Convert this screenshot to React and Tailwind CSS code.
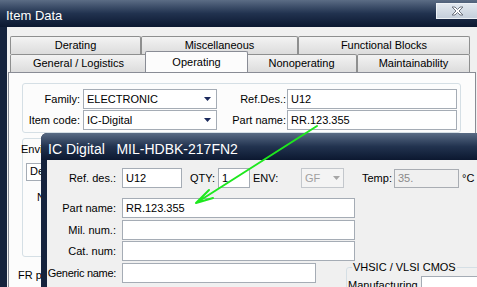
import React from "react"

const Tab = ({ label, w, selected }) => (
  <div
    className={
      selected
        ? "relative z-10 -mt-[2px] -mx-[2px] h-[21px] bg-[#fcfcfc] border border-b-0 border-[#898c95] rounded-t-[2px] flex items-center justify-center"
        : "h-[18px] bg-gradient-to-b from-[#f3f3f3] to-[#dcdcdc] border border-b-0 border-[#8e8f8f] rounded-t-[2px] flex items-center justify-center"
    }
    style={{ width: selected ? w + 4 : w }}
  >
    {label}
  </div>
)

const Arrow = ({ disabled }) => (
  <svg width="7" height="4" viewBox="0 0 7 4">
    <path d="M0 0H7L3.5 4Z" fill={disabled ? "#a6a6a6" : "#1b2a5c"} />
  </svg>
)

const Combo = ({ value, w }) => (
  <div className="h-[20px] border border-[#a5acb5] bg-white flex items-center justify-between pl-[3px] pr-[5px]" style={{ width: w }}>
    <span>{value}</span>
    <Arrow />
  </div>
)

const Box = ({ value, w }) => (
  <div className="h-[20px] border border-[#a5acb5] bg-white flex items-center pl-[3px]" style={{ width: w }}>
    {value}
  </div>
)

export default function App() {
  return (
    <div className="relative w-[477px] h-[287px] overflow-hidden bg-[#15233d] font-['Liberation_Sans',Arial,sans-serif] text-[11px] text-black">
      {/* outer window title */}
      <div className="h-[27px] flex items-start justify-between bg-gradient-to-b from-[#5c6d85] via-[#21324f] to-[#0c1830]">
        <div className="pl-[6px] pt-[6px] text-[13px] text-white">Item Data</div>
        <div className="mt-[3px] w-[41px] h-[16px] border border-[#eef2f6] border-r-0 bg-gradient-to-b from-[#e2e8ef] to-[#c5cfdb] flex items-center justify-center">
          <svg width="13" height="10" viewBox="0 0 13 10">
            <path d="M1 1H4L6.5 3.5L9 1H12L8 5L12 9H9L6.5 6.5L4 9H1L5 5Z" fill="#fff" stroke="#6f7580" strokeWidth="1" strokeLinejoin="round" />
          </svg>
        </div>
      </div>

      {/* outer window body */}
      <div className="ml-[7px] h-[260px] bg-[#f0f0f0] pt-[9px] pl-[1px]">
        <div className="ml-[2px] flex">
          <Tab label="Derating" w={131} />
          <Tab label="Miscellaneous" w={157} />
          <Tab label="Functional Blocks" w={172} />
        </div>
        <div className="ml-[2px] flex items-end h-[18px]">
          <Tab label="General / Logistics" w={137} />
          <Tab label="Operating" w={99} selected />
          <Tab label="Nonoperating" w={111} />
          <Tab label="Maintainability" w={113} />
        </div>

        <div className="w-[468px] h-[230px] border border-[#898c95] bg-[#fcfcfc] pt-[10px] pl-[13px]">
          <div className="w-[439px] h-[50px] border border-[#d5dfe5] rounded-[3px] pt-[5px] flex">
            <div className="flex flex-col gap-[1px]">
              <div className="flex items-center">
                <span className="w-[57px] text-right mr-[3px]">Family:</span>
                <Combo value="ELECTRONIC" w={134} />
              </div>
              <div className="flex items-center">
                <span className="w-[57px] text-right mr-[3px]">Item code:</span>
                <Combo value="IC-Digital" w={134} />
              </div>
            </div>
            <div className="ml-[12px] flex flex-col gap-[1px]">
              <div className="flex items-center">
                <span className="w-[57px] text-right mr-[1px]">Ref.Des.:</span>
                <Box value="U12" w={170} />
              </div>
              <div className="flex items-center">
                <span className="w-[57px] text-right mr-[1px]">Part name:</span>
                <Box value="RR.123.355" w={170} />
              </div>
            </div>
          </div>

          {/* environment group, mostly hidden under the dialog */}
          <div className="mt-[5px] w-[439px] h-[119px] border border-[#d5dfe5] rounded-[3px] pt-[2px]">
            <div className="-ml-[2px]">Environment</div>
            <div className="mt-[5px] ml-[3px] w-[120px] h-[18px] border border-[#a5acb5] bg-white flex items-center pl-[3px]">Default</div>
            <div className="mt-[8px] ml-[14px]">Nominal temperature</div>
          </div>
          <div className="mt-[10px] -ml-[4px]">FR prediction</div>
        </div>
      </div>

      {/* IC Digital dialog */}
      <div className="absolute left-[41px] top-[133px] w-[450px] h-[160px] rounded-tl-[6px] bg-[#15233d] overflow-hidden">
        <div className="h-[27px] bg-gradient-to-b from-[#5a6c85] via-[#22334f] to-[#0c1830] text-white text-[14px] pl-[7px] pt-[6px] whitespace-pre">
          IC Digital   MIL-HDBK-217FN2
        </div>
        <div className="ml-[6px] h-[133px] bg-[#f0f0f0] pt-[8px] whitespace-nowrap">
          <div className="flex items-center">
            <span className="w-[69px] text-right">Ref. des.:</span>
            <div className="ml-[6px]"><Box value="U12" w={60} /></div>
            <span className="ml-[8px] w-[26px]">QTY:</span>
            <div className="ml-[2px]"><Box value="1" w={32} /></div>
            <span className="ml-[3px] w-[48px]">ENV:</span>
            <div className="w-[43px] h-[20px] border border-[#c3c7cc] bg-[#f4f4f4] flex items-center justify-between pl-[3px] pr-[3px] text-[#a0a0a0]">
              <span>GF</span>
              <Arrow disabled />
            </div>
            <span className="ml-[18px] w-[32px]">Temp:</span>
            <div className="w-[65px] h-[19px] border border-[#a9adb3] bg-[#f0f0f0] flex items-center pl-[3px] text-[#8a8a8a]">35.</div>
            <span className="ml-[3px]">°C</span>
          </div>

          <div className="mt-[10px] flex items-center">
            <span className="w-[69px] text-right">Part name:</span>
            <div className="ml-[6px]"><Box value="RR.123.355" w={233} /></div>
          </div>
          <div className="mt-[2px] flex items-center">
            <span className="w-[69px] text-right">Mil. num.:</span>
            <div className="ml-[6px]"><Box value="" w={233} /></div>
          </div>
          <div className="mt-[1px] flex items-center">
            <span className="w-[69px] text-right">Cat. num:</span>
            <div className="ml-[6px]"><Box value="" w={233} /></div>
          </div>
          <div className="mt-[2px] flex items-start">
            <span className="w-[69px] text-right leading-[20px] tracking-[-0.3px]">Generic name:</span>
            <div className="ml-[6px]"><Box value="" w={194} /></div>
            <fieldset className="ml-[30px] mt-[-4px] w-[140px] h-[40px] border border-[#d5dfe5] rounded-[3px] pl-[1px]">
              <legend className="ml-[4px] px-[1px]">VHSIC / VLSI CMOS</legend>
              <div className="flex items-center">
                <span>Manufacturing</span>
                <div className="ml-[3px] w-[60px] h-[20px] border border-[#a5acb5] bg-white"></div>
              </div>
            </fieldset>
          </div>
        </div>
      </div>

      {/* annotation arrow */}
      <svg className="absolute inset-0 pointer-events-none z-20" width="477" height="287" viewBox="0 0 477 287">
        <path d="M317 126L196 203M196 203L209 190M196 203L213 198" stroke="#1ee81e" strokeWidth="2" fill="none" strokeLinecap="round" />
      </svg>
    </div>
  )
}
